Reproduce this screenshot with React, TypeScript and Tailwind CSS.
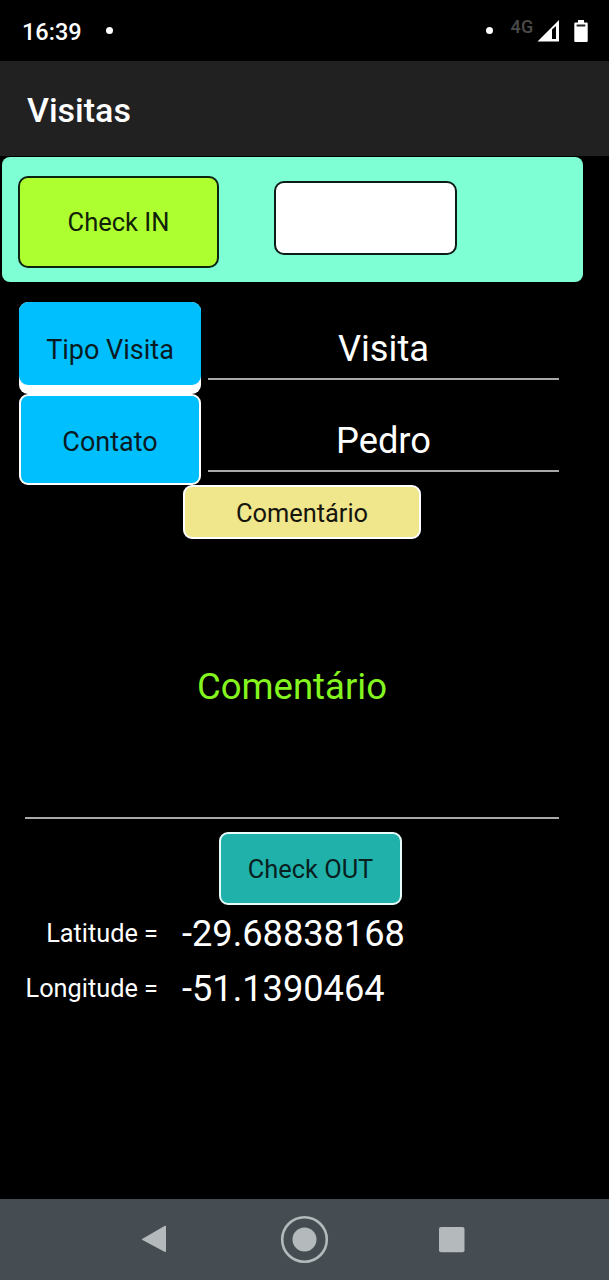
import React, { useState } from 'react';

interface FieldRowProps {
    label: string;
    value: string;
    onChange: (value: string) => void;
    buttonClass: string;
    labelClass: string;
}

const StatusBar: React.FC = () => (
    <div className="h-[61px] bg-black flex items-center justify-between pl-[22px] pr-[21.500px]">
        <div className="flex items-center gap-[24px]">
            <span className="text-[23.5px] leading-[28px] font-medium pt-[2px]">16:39</span>
            <span className="w-[7px] h-[7px] rounded-full bg-white" />
        </div>
        <div className="flex items-center">
            <span className="w-[7px] h-[7px] rounded-full bg-white mr-[18px]" />
            <span className="text-[18px] leading-[20px] font-medium text-[#4a4a4a] tracking-[0.2px] mr-[3px] mb-[7px]">4G</span>
            <svg width="23" height="23" viewBox="0 0 23 23" className="mr-[14px]">
                <path fill="#fff" fillRule="evenodd" d="M0.5 22.5L22 1V22.5ZM15 10.5V20H19V7Z" />
            </svg>
            <svg width="14" height="24" viewBox="0 0 14 24">
                <path fill="#fff" d="M4 1h6v2.5h2.7q1 0 1 1v17.5q0 1-1 1H1.3q-1 0-1-1V4.500q0-1 1-1H4z" />
                <path fill="#222" d="M2.6 5.5h8.700v2H2.600z" />
            </svg>
        </div>
    </div>
);

const FieldRow: React.FC<FieldRowProps> = ({ label, value, onChange, buttonClass, labelClass }) => (
    <div className="flex items-start">
        <button className={`w-[182px] shrink-0 rounded-[9px] text-[#0a1a22] text-[27px] ${buttonClass}`}>
            <span className={`flex items-center justify-center w-full bg-[#00bfff] ${labelClass}`}>{label}</span>
        </button>
        <input
            type="text"
            value={value}
            onChange={(e) => onChange(e.target.value)}
            className="mt-[16px] ml-[7px] w-[351px] h-[62px] border-b-2 border-[#a8a8a8] bg-transparent outline-none text-center text-[36.3px] leading-[44px]"
        />
    </div>
);

const NavBar: React.FC = () => (
    <div className="h-[81px] bg-[#464d52] flex justify-center items-center">
        <svg width="609" height="81" viewBox="0 0 609 81" fill="#b4b9bb">
            <path d="M142.500 39.700L164.500 27Q166 26.300 166 27.800V52Q166 53.500 164.500 52.800L142.500 41Q141 40.300 142.500 39.700Z" />
            <circle cx="304.500" cy="40.500" r="22.300" fill="none" stroke="#b4b9bb" strokeWidth="2.600" />
            <circle cx="304.500" cy="40.500" r="12" />
            <rect x="439" y="28" width="25.500" height="25.200" rx="2" />
        </svg>
    </div>
);

export default function App() {
    const [tipoVisita, setTipoVisita] = useState('Visita');
    const [contato, setContato] = useState('Pedro');
    const [comentario, setComentario] = useState('Comentário');
    const [checkIn, setCheckIn] = useState('');

    return (
        <div className="w-[609px] h-[1280px] bg-black text-white flex flex-col overflow-hidden font-['Roboto',sans-serif]">
            <StatusBar />
            <header className="h-[95px] bg-[#212121] flex items-center pl-[27px] pt-[3px]">
                <h1 className="text-[34px] leading-[40px] font-medium">Visitas</h1>
            </header>

            <main className="flex-1 flex flex-col pt-px">
                <section className="ml-[2px] w-[581px] h-[125px] shrink-0 rounded-[8px] bg-[#7fffd4] flex items-start pl-[16px]">
                    <button className="mt-[19px] w-[201px] h-[92px] rounded-[10px] border-2 border-[#0c2312] bg-[#adff2f] text-[#10210a] text-[25.5px]">
                        Check IN
                    </button>
                    <input
                        type="text"
                        value={checkIn}
                        onChange={(e) => setCheckIn(e.target.value)}
                        className="mt-[24px] ml-[55px] w-[183px] h-[74px] rounded-[10px] border-2 border-[#0c1c17] bg-white outline-none px-3 text-black text-2xl"
                    />
                </section>

                <section className="mt-[20px] pl-[19px] flex flex-col">
                    <FieldRow
                        label="Tipo Visita"
                        value={tipoVisita}
                        onChange={setTipoVisita}
                        buttonClass="h-[92px] bg-white pb-[9px]"
                        labelClass="h-[83px] rounded-[9px] pt-[13px]"
                    />
                    <FieldRow
                        label="Contato"
                        value={contato}
                        onChange={setContato}
                        buttonClass="h-[91px] bg-white p-[2px]"
                        labelClass="h-[87px] rounded-[7px] pt-[5px]"
                    />
                </section>

                <button className="ml-[183px] w-[238px] h-[54px] shrink-0 rounded-[9px] border-2 border-white bg-[#f0e68c] text-[#16150c] text-[25.4px] pt-[2px]">
                    Comentário
                </button>
                <input
                    type="text"
                    value={comentario}
                    onChange={(e) => setComentario(e.target.value)}
                    className="ml-[25px] w-[534px] h-[280px] shrink-0 border-b-2 border-[#a8a8a8] bg-transparent pt-[16px] outline-none text-center text-[36.5px] text-[#84f51e]"
                />
                <button className="mt-[13px] ml-[219px] w-[183px] h-[73px] shrink-0 rounded-[9px] border-2 border-[#e6fbfa] bg-[#20b2aa] text-[#08201e] text-[25.4px] pt-[2px]">
                    Check OUT
                </button>

                <dl className="mt-px grid grid-cols-[158px_1fr] auto-rows-[55px] items-center gap-x-[24px]">
                    <dt className="text-right text-[25.3px] pt-px">Latitude =</dt>
                    <dd className="text-[36.2px] pt-[2px]">-29.68838168</dd>
                    <dt className="text-right text-[25.3px] pt-px">Longitude =</dt>
                    <dd className="text-[36.2px] pt-[2px]">-51.1390464</dd>
                </dl>
            </main>

            <NavBar />
        </div>
    );
}
